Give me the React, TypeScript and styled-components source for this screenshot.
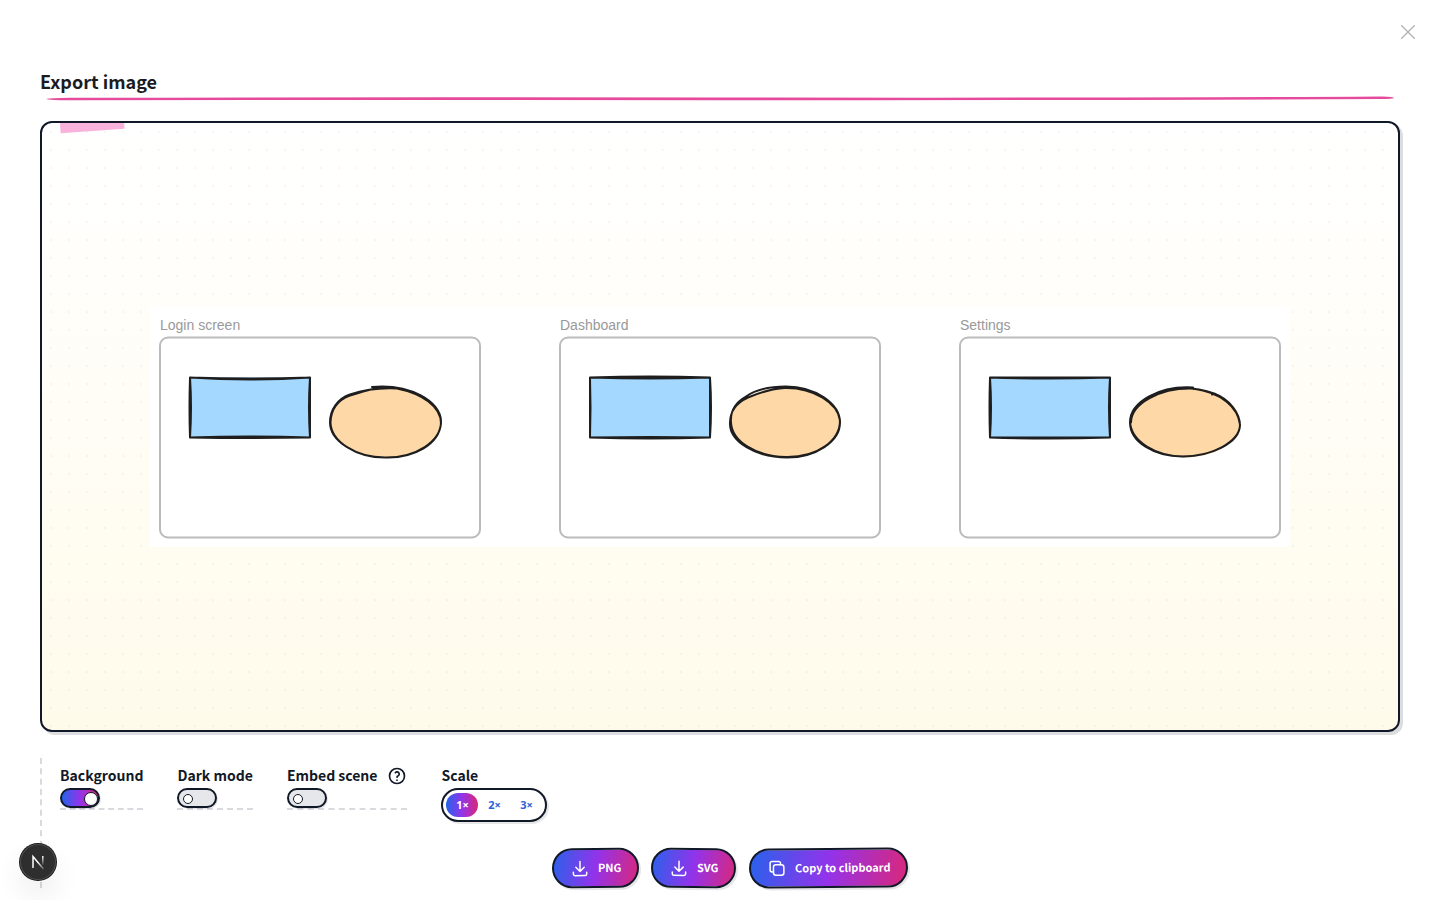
import React from "react";
import styled, { createGlobalStyle } from "styled-components";

const ink = "#111827";
const brand = "linear-gradient(90deg, #2563eb 0%, #9333ea 50%, #db2777 100%)";

const GlobalStyle = createGlobalStyle`
  *, *::before, *::after { box-sizing: border-box; }
  body {
    margin: 0;
    background: #ffffff;
    color: ${ink};
    font-family: "Noto Sans CJK SC", "Noto Sans", sans-serif;
  }
  button, input { font: inherit; }
`;

const Modal = styled.main`
  position: relative;
  display: flex;
  flex-direction: column;
  min-height: 100vh;
  padding: 68px 40px 12px;
`;

const CloseButton = styled.button`
  position: absolute;
  top: 16px;
  right: 16px;
  display: grid;
  place-items: center;
  width: 32px;
  height: 32px;
  padding: 0;
  border: 0;
  background: none;
  color: #b0b0b0;
`;

const Header = styled.header`
  margin-bottom: 20px;
`;

const Title = styled.h1`
  margin: 0;
  padding-bottom: 2px;
  color: #1b1b1f;
  font-size: 18px;
  line-height: 26px;
  font-weight: 700;
`;

const Underline = styled.svg`
  display: block;
  width: 100%;
  height: 5px;
`;

const Preview = styled.section`
  position: relative;
  display: flex;
  flex: 1;
  align-items: center;
  justify-content: center;
  min-height: 300px;
  padding: 20px;
  overflow: hidden;
  border-radius: 12px;
  border: 2px solid ${ink};
  background:
    radial-gradient(circle, rgba(17, 24, 39, 0.04) 1px, transparent 1px) 0 0 / 18px 18px,
    linear-gradient(180deg, #ffffff 0%, #fffbeb 100%);
`;

const PreviewShadow = styled.div`
  display: flex;
  flex: 1;
  border-radius: 12px;
  box-shadow: 3px 3px 0 rgba(17, 24, 39, 0.15);
`;

const Tape = styled.span`
  position: absolute;
  top: -10px;
  left: 18px;
  width: 64px;
  height: 18px;
  background: #f9b2db;
  transform: rotate(-4deg);
`;

const Drawing = styled.svg`
  display: block;
  width: 1140px;
  max-width: 100%;
  height: auto;
  background: #ffffff;
`;

const Controls = styled.section`
  margin-top: 26px;
  padding-left: 18px;
  border-left: 2px dashed #d9dade;
`;

const Settings = styled.div`
  display: flex;
  flex-wrap: wrap;
  align-items: flex-start;
  gap: 34px;
  padding-top: 6px;
`;

const Setting = styled.div<{ $ruled?: boolean }>`
  border-bottom: ${(p) => (p.$ruled ? "2px dashed #d9dade" : "0")};
`;

const SettingLabel = styled.label`
  display: flex;
  align-items: flex-start;
  gap: 10px;
  height: 24px;
  font-size: 14px;
  line-height: 22px;
  font-weight: 700;
  white-space: nowrap;

  svg {
    align-self: center;
  }
`;

const Switch = styled.input`
  appearance: none;
  display: flex;
  align-items: center;
  width: 40px;
  height: 20px;
  margin: 0;
  padding: 1px 4px 0;
  border: 2px solid ${ink};
  border-radius: 10px;
  background: #e5e7eb;
  box-shadow: 1px 1px 0 rgba(17, 24, 39, 0.12);

  &::before {
    content: "";
    width: 10px;
    height: 10px;
    border: 1px solid ${ink};
    border-radius: 50%;
    background: #ffffff;
  }

  &:checked {
    justify-content: flex-end;
    padding-right: 0;
    background: ${brand};
  }

  &:checked::before {
    width: 14px;
    height: 14px;
  }
`;

const ScaleGroup = styled.div`
  display: flex;
  height: 34px;
  padding: 3px;
  border: 2px solid ${ink};
  border-radius: 17px;
  background: #ffffff;
  box-shadow: 2px 2px 0 rgba(17, 24, 39, 0.1);
`;

const ScaleChoice = styled.label`
  position: relative;
  display: grid;
  place-items: center;
  width: 32px;
  height: 24px;
  padding-bottom: 2px;
  border-radius: 12px;
  color: #2f62d9;
  font-family: "Noto Sans", sans-serif;
  font-size: 11px;
  font-weight: 700;

  input {
    position: absolute;
    inset: 0;
    margin: 0;
    opacity: 0;
  }

  &:has(input:checked) {
    background: ${brand};
    color: #ffffff;
  }
`;

const Actions = styled.div`
  display: flex;
  flex-wrap: wrap;
  justify-content: center;
  gap: 12px;
  margin-top: 26px;
`;

const ActionButton = styled.button`
  display: flex;
  align-items: center;
  gap: 8px;
  height: 40px;
  padding: 0 16px;
  border: 2px solid ${ink};
  border-radius: 20px;
  background: linear-gradient(100deg, #2563eb 0%, #9333ea 50%, #db2777 100%) border-box;
  box-shadow: 2px 2px 0 rgba(17, 24, 39, 0.1);
  color: #ffffff;
  font-size: 11px;
  font-weight: 700;
  transform: rotate(-0.4deg);

  &:nth-child(even) {
    transform: rotate(0.4deg);
  }
`;

const ActionText = styled.span`
  padding-bottom: 2px;
`;

const DevBadge = styled.button`
  position: fixed;
  left: 20px;
  bottom: 20px;
  display: grid;
  place-items: center;
  width: 36px;
  height: 36px;
  padding: 0;
  border: 0;
  border-radius: 50%;
  background: #2e2e2e;
  box-shadow:
    0 0 0 1px #171717,
    inset 0 0 0 1px #4d4d4d,
    0 16px 32px -8px rgba(0, 0, 0, 0.24);
`;

type FrameProps = { x: number; name: string; box: string; oval: string };

const frames: FrameProps[] = [
  {
    x: 10,
    name: "Login screen",
    box: "M30 40Q90 44 150 40M30 40Q90 42 150 40M150 40Q148 70 150 100M150 40Q150 70 150 100M150 100Q90 98 30 100M150 100Q90 101 30 100M30 100Q32 70 30 40M30 100Q29 70 30 40",
    oval: "M212 49.5C250 46 281 64 281 84C281 104 256 120 226 120C195 120 170 103 170 85C170 72 178 61 190 57C202 53 216 50 237 51M237 51C262 56 281 69 281 86C279 107 254 121 225 120C196 120 171 104 170.5 85C171 70 179 62 190 58C200 55 212 51 222 50",
  },
  {
    x: 410,
    name: "Dashboard",
    box: "M30 40Q90 38 150 40M30 40Q90 42 150 40M150 40Q152 70 150 100M150 40Q150 70 150 100M150 100Q90 102 30 100M150 100Q90 99 30 100M30 100Q31 70 30 40M30 100Q30 70 30 40",
    oval: "M186 59C199 50 214 49 226 49C255 49 280 66 280 85C280 104 256 120 227 120C196 120 169 104 170 85C170 74 177 65 188 60C198 56 208 52 220 51M188 60C200 55 212 51 225 50.5C254 50 278 66 280 83C280 103 258 120 226 119.5C196 119 172 104 171 85C170 72 177 64 186 59",
  },
  {
    x: 810,
    name: "Settings",
    box: "M30 40Q90 42 150 40M30 40Q90 40 150 40M150 40Q148 70 150 100M150 40Q150 70 150 100M150 100Q90 102 30 100M150 100Q90 100 30 100M30 100Q32 70 30 40M30 100Q29 70 30 40",
    oval: "M233 50C200 48 170 64 170 85C170 105 195 119 222 119C250 119 280 106 280 87C278 70 262 55 233 51C200 50 171 66 171 85M214 51C232 50 246 53 254 56L252 57M254 56C270 62 280 76 280 88C279 104 252 119 224 119C196 119 171 104 170 84",
  },
];

function Frame({ x, name, box, oval }: FrameProps) {
  return (
    <g transform={`translate(${x} 30.5)`}>
      <text y="-7.5" fontSize="14" fontFamily="'Liberation Sans', Arial, sans-serif" fill="#999999">
        {name}
      </text>
      <rect width="320" height="200" rx="8" fill="none" stroke="#bbbbbb" strokeWidth="2" />
      <rect x="30" y="40" width="120" height="60" fill="#a5d8ff" />
      <ellipse cx="225" cy="85" rx="55" ry="35" fill="#ffd8a8" />
      <g fill="none" stroke="#1e1e1e" strokeWidth="2" strokeLinecap="round">
        <path d={box} />
        <path d={oval} />
      </g>
    </g>
  );
}

const DownloadIcon = () => (
  <svg width="20" height="20" viewBox="0 0 20 20" fill="none" stroke="currentColor" strokeWidth="1.5" strokeLinecap="round" strokeLinejoin="round" aria-hidden="true">
    <path d="M3.333 14.167v1.666c0 .92.747 1.667 1.667 1.667h10c.92 0 1.667-.746 1.667-1.667v-1.666M5.833 9.167 10 13.333l4.167-4.166M10 3.333v10" />
  </svg>
);

const CopyIcon = () => (
  <svg width="20" height="20" viewBox="0 0 20 20" fill="none" stroke="currentColor" strokeWidth="1.5" strokeLinecap="round" strokeLinejoin="round" aria-hidden="true">
    <path d="M14.375 6.458H8.958a2.5 2.5 0 0 0-2.5 2.5v5.417a2.5 2.5 0 0 0 2.5 2.5h5.417a2.5 2.5 0 0 0 2.5-2.5V8.958a2.5 2.5 0 0 0-2.5-2.5Z" />
    <path d="M13.542 6.458V5c0-1.036-.84-1.875-1.875-1.875H5c-1.036 0-1.875.84-1.875 1.875v6.667c0 1.035.84 1.875 1.875 1.875h1.458" />
  </svg>
);

const HelpIcon = () => (
  <svg width="20" height="20" viewBox="0 0 24 24" fill="none" stroke="currentColor" strokeWidth="2" strokeLinecap="round" strokeLinejoin="round" role="img" aria-label="Help">
    <circle cx="12" cy="12" r="9" />
    <path d="M12 17v.01M12 13.500a1.500 1.500 0 0 1 1-1.500 2.600 2.600 0 1 0-3-4" />
  </svg>
);

export default function App() {
  return (
    <>
      <GlobalStyle />
      <Modal>
        <CloseButton aria-label="Close">
          <svg width="14" height="14" viewBox="0 0 14 14" fill="none" stroke="currentColor" strokeWidth="1.25" strokeLinecap="round">
            <path d="M.7.7 13.300 13.300M13.300.7.7 13.300" />
          </svg>
        </CloseButton>

        <Header>
          <Title>Export image</Title>
          <Underline viewBox="0 0 1360 5" preserveAspectRatio="none" aria-hidden="true">
            <path d="M6 3Q10 1.900 30 1.700Q340 1 680 1.500Q1100 2 1342 .6Q1354 1 1354 2Q1352 2.900 1342 3Q1100 4.200 680 4.200Q340 3.600 30 4.300Q10 4.300 6 3Z" fill="#e64a9b" />
          </Underline>
        </Header>

        <PreviewShadow>
          <Preview aria-label="Preview">
            <Tape />
            <Drawing viewBox="0 0 1140 240">
              {frames.map((f) => (
                <Frame key={f.name} {...f} />
              ))}
            </Drawing>
          </Preview>
        </PreviewShadow>

        <Controls>
          <Settings>
            <Setting $ruled>
              <SettingLabel htmlFor="background">Background</SettingLabel>
              <Switch id="background" type="checkbox" role="switch" defaultChecked />
            </Setting>
            <Setting $ruled>
              <SettingLabel htmlFor="dark">Dark mode</SettingLabel>
              <Switch id="dark" type="checkbox" role="switch" />
            </Setting>
            <Setting $ruled>
              <SettingLabel htmlFor="embed">
                Embed scene
                <HelpIcon />
              </SettingLabel>
              <Switch id="embed" type="checkbox" role="switch" />
            </Setting>
            <Setting>
              <SettingLabel as="div" id="scale-label">Scale</SettingLabel>
              <ScaleGroup role="radiogroup" aria-labelledby="scale-label">
                {[1, 2, 3].map((n) => (
                  <ScaleChoice key={n}>
                    <input type="radio" name="scale" value={n} defaultChecked={n === 1} />
                    {`${n}×`}
                  </ScaleChoice>
                ))}
              </ScaleGroup>
            </Setting>
          </Settings>

          <Actions>
            <ActionButton>
              <DownloadIcon />
              <ActionText>PNG</ActionText>
            </ActionButton>
            <ActionButton>
              <DownloadIcon />
              <ActionText>SVG</ActionText>
            </ActionButton>
            <ActionButton>
              <CopyIcon />
              <ActionText>Copy to clipboard</ActionText>
            </ActionButton>
          </Actions>
        </Controls>
      </Modal>

      <DevBadge aria-label="Open Next.js Dev Tools">
        <svg width="14" height="16" viewBox="0 0 14 16" fill="none" aria-hidden="true">
          <defs>
            <linearGradient id="n-diagonal" x1="7" y1="8" x2="13" y2="15" gradientUnits="userSpaceOnUse">
              <stop stopColor="#ffffff" />
              <stop offset="1" stopColor="#ffffff" stopOpacity="0.2" />
            </linearGradient>
            <linearGradient id="n-stem" x1="12" y1="2" x2="12" y2="12" gradientUnits="userSpaceOnUse">
              <stop stopColor="#ffffff" />
              <stop offset="1" stopColor="#ffffff" stopOpacity="0" />
            </linearGradient>
          </defs>
          <path d="M2 14V2.500L12.500 15" stroke="url(#n-diagonal)" strokeWidth="1.500" />
          <path d="M11.800 2v9" stroke="url(#n-stem)" strokeWidth="1.500" />
        </svg>
      </DevBadge>
    </>
  );
}
